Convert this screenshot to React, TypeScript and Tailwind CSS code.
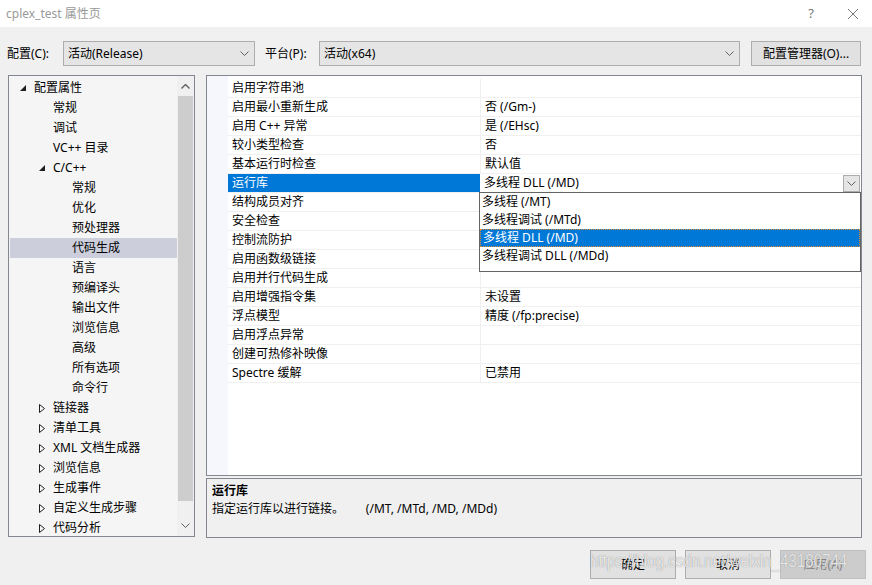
import React from 'react';

const FONT = { fontFamily: '"Noto Sans", "Noto Sans CJK SC", sans-serif' };

type TreeItem = { label: string; level: number; expander?: 'open' | 'closed'; selected?: boolean };

const treeItems: TreeItem[] = [
  { label: '配置属性', level: 0, expander: 'open' },
  { label: '常规', level: 1 },
  { label: '调试', level: 1 },
  { label: 'VC++ 目录', level: 1 },
  { label: 'C/C++', level: 1, expander: 'open' },
  { label: '常规', level: 2 },
  { label: '优化', level: 2 },
  { label: '预处理器', level: 2 },
  { label: '代码生成', level: 2, selected: true },
  { label: '语言', level: 2 },
  { label: '预编译头', level: 2 },
  { label: '输出文件', level: 2 },
  { label: '浏览信息', level: 2 },
  { label: '高级', level: 2 },
  { label: '所有选项', level: 2 },
  { label: '命令行', level: 2 },
  { label: '链接器', level: 1, expander: 'closed' },
  { label: '清单工具', level: 1, expander: 'closed' },
  { label: 'XML 文档生成器', level: 1, expander: 'closed' },
  { label: '浏览信息', level: 1, expander: 'closed' },
  { label: '生成事件', level: 1, expander: 'closed' },
  { label: '自定义生成步骤', level: 1, expander: 'closed' },
  { label: '代码分析', level: 1, expander: 'closed' },
];

const props: [string, string][] = [
  ['启用字符串池', ''],
  ['启用最小重新生成', '否 (/Gm-)'],
  ['启用 C++ 异常', '是 (/EHsc)'],
  ['较小类型检查', '否'],
  ['基本运行时检查', '默认值'],
  ['运行库', '多线程 DLL (/MD)'],
  ['结构成员对齐', ''],
  ['安全检查', ''],
  ['控制流防护', ''],
  ['启用函数级链接', ''],
  ['启用并行代码生成', ''],
  ['启用增强指令集', '未设置'],
  ['浮点模型', '精度 (/fp:precise)'],
  ['启用浮点异常', ''],
  ['创建可热修补映像', ''],
  ['Spectre 缓解', '已禁用'],
];

const options = ['多线程 (/MT)', '多线程调试 (/MTd)', '多线程 DLL (/MD)', '多线程调试 DLL (/MDd)'];

const Chevron = ({ color = '#606060' }: { color?: string }) => (
  <svg width="9" height="5" viewBox="0 0 9 5">
    <path d="M0.5 0.5 L4.5 4.5 L8.5 0.5" fill="none" stroke={color} strokeWidth="1" />
  </svg>
);

const Select = ({ value, width }: { value: string; width: string }) => (
  <div className={`${width} h-[25px] bg-[#e5e5e5] border border-[#adadad] flex items-center justify-between pl-[4px] pr-[5px]`}>
    <span>{value}</span>
    <Chevron />
  </div>
);

export default function App() {
  return (
    <div
      className="relative w-[872px] h-[585px] bg-[#f0f0f0] overflow-hidden flex flex-col text-[12px] text-black leading-none"
      style={FONT}
    >
      {/* title bar */}
      <div className="h-[27px] bg-white flex items-center justify-between pl-[6px] pr-[14px] text-[#999999]">
        <span className="text-[12px]">cplex_test 属性页</span>
        <div className="flex items-center gap-[34px]">
          <span className="text-[13px] text-[#777]">?</span>
          <svg width="10" height="10" viewBox="0 0 10 10">
            <path d="M0 0 L10 10 M10 0 L0 10" stroke="#777" strokeWidth="1" />
          </svg>
        </div>
      </div>

      {/* config row */}
      <div className="mt-[14px] h-[25px] flex items-center pl-[7px]">
        <span className="w-[56px]">配置(C):</span>
        <Select value="活动(Release)" width="w-[192px]" />
        <span className="ml-[10px] w-[54px]">平台(P):</span>
        <Select value="活动(x64)" width="w-[421px]" />
        <div className="ml-[11px] w-[110px] h-[25px] bg-[#e1e1e1] border border-[#adadad] flex items-center justify-center">
          配置管理器(O)...
        </div>
      </div>

      {/* panels */}
      <div className="mt-[9px] flex pl-[8px] gap-[11px]">
        {/* tree */}
        <div className="w-[187px] h-[462px] border border-[#828790] bg-[#f5f5f5] flex">
          <div className="flex-1 pt-[2px] pl-[1px]">
            {treeItems.map((it, i) => (
              <div
                key={i}
                className={`h-[20px] flex items-center relative ${it.selected ? 'bg-[#cccedb]' : ''}`}
                style={{ paddingLeft: 24 + it.level * 19 }}
              >
                {it.expander === 'open' && (
                  <svg
                    className="absolute"
                    style={{ left: 10 + it.level * 19, top: 7 }}
                    width="6"
                    height="6"
                    viewBox="0 0 6 6"
                  >
                    <path d="M6 0 L6 6 L0 6 Z" fill="#1e1e1e" />
                  </svg>
                )}
                {it.expander === 'closed' && (
                  <svg
                    className="absolute"
                    style={{ left: 10 + it.level * 19, top: 6 }}
                    width="6"
                    height="9"
                    viewBox="0 0 6 9"
                  >
                    <path d="M0.5 0.5 L5.5 4.5 L0.5 8.5 Z" fill="none" stroke="#1e1e1e" strokeWidth="1" />
                  </svg>
                )}
                <span>{it.label}</span>
              </div>
            ))}
          </div>
          <div className="w-[17px] bg-[#f0f0f0] flex flex-col items-center">
            <div className="h-[20px] flex items-center justify-center">
              <svg width="9" height="5" viewBox="0 0 9 5">
                <path d="M0.5 4.5 L4.5 0.5 L8.5 4.5" fill="none" stroke="#606060" strokeWidth="1.4" />
              </svg>
            </div>
            <div className="w-[15px] h-[405px] bg-[#cdcdcd]" />
            <div className="flex-1 flex items-end pb-[8px]">
              <Chevron />
            </div>
          </div>
        </div>

        {/* right column */}
        <div className="flex flex-col">
          <div className="relative w-[656px] h-[401px] border border-[#828790] bg-white flex">
            <div className="w-[21px] bg-[#f5f7fc]" />
            <div className="flex-1 pt-[3px]">
              {props.map(([name, value], i) => {
                const sel = i === 5;
                return (
                  <div key={i} className="h-[19px] flex">
                    <div
                      className={`w-[252px] flex items-center pl-[4px] border-b border-[#f0f0f0] ${
                        sel ? 'bg-[#0078d7] text-white border-[#0078d7]' : ''
                      }`}
                    >
                      {name}
                    </div>
                    {sel ? (
                      <div className="flex-1 flex items-center justify-between pl-[4px] pr-[1px] border-b border-[#f0f0f0]">
                        <span>{value}</span>
                        <div className="w-[17px] h-[17px] bg-[#e5e5e5] border border-[#acacac] flex items-center justify-center">
                          <Chevron />
                        </div>
                      </div>
                    ) : (
                      <div className="flex-1 flex items-center pl-[4px] border-b border-l border-[#f0f0f0]">
                        {value}
                      </div>
                    )}
                  </div>
                );
              })}
            </div>

            {/* dropdown list */}
            <div className="absolute left-[272px] top-[116px] w-[382px] h-[80px] bg-white border border-[#646464]">
              {options.map((o, i) => (
                <div
                  key={i}
                  className={`h-[18px] flex items-center pl-[2px] ${
                    i === 2 ? 'bg-[#0078d7] text-white border border-dotted border-[#e08a2c]' : ''
                  }`}
                >
                  {o}
                </div>
              ))}
            </div>
          </div>

          {/* description */}
          <div className="mt-[2px] w-[656px] h-[60px] border border-[#828790] bg-[#f0f0f0] px-[5px] pt-[6px] flex flex-col gap-[6px]">
            <span className="font-bold">运行库</span>
            <span className="whitespace-pre">指定运行库以进行链接。       (/MT, /MTd, /MD, /MDd)</span>
          </div>
        </div>
      </div>

      {/* buttons */}
      <div className="mt-[12px] flex justify-end pr-[6px] gap-[9px]">
        <div className="w-[86px] h-[29px] bg-[#e1e1e1] border border-[#adadad] flex items-center justify-center">确定</div>
        <div className="w-[86px] h-[29px] bg-[#e1e1e1] border border-[#adadad] flex items-center justify-center">取消</div>
        <div className="w-[86px] h-[29px] bg-[#cccccc] border border-[#bfbfbf] text-[#838383] flex items-center justify-center">应用(A)</div>
      </div>

      {/* watermark */}
      <div
        className="absolute left-[590px] top-[552px] text-[18px] text-white/80 whitespace-nowrap scale-x-[0.84] origin-left"
        style={{ fontFamily: '"Liberation Sans", Arial, sans-serif', textShadow: '0 0 1px rgba(90,90,90,0.8)' }}
      >
        https://blog.csdn.net/weixin_43180744
      </div>
    </div>
  );
}
